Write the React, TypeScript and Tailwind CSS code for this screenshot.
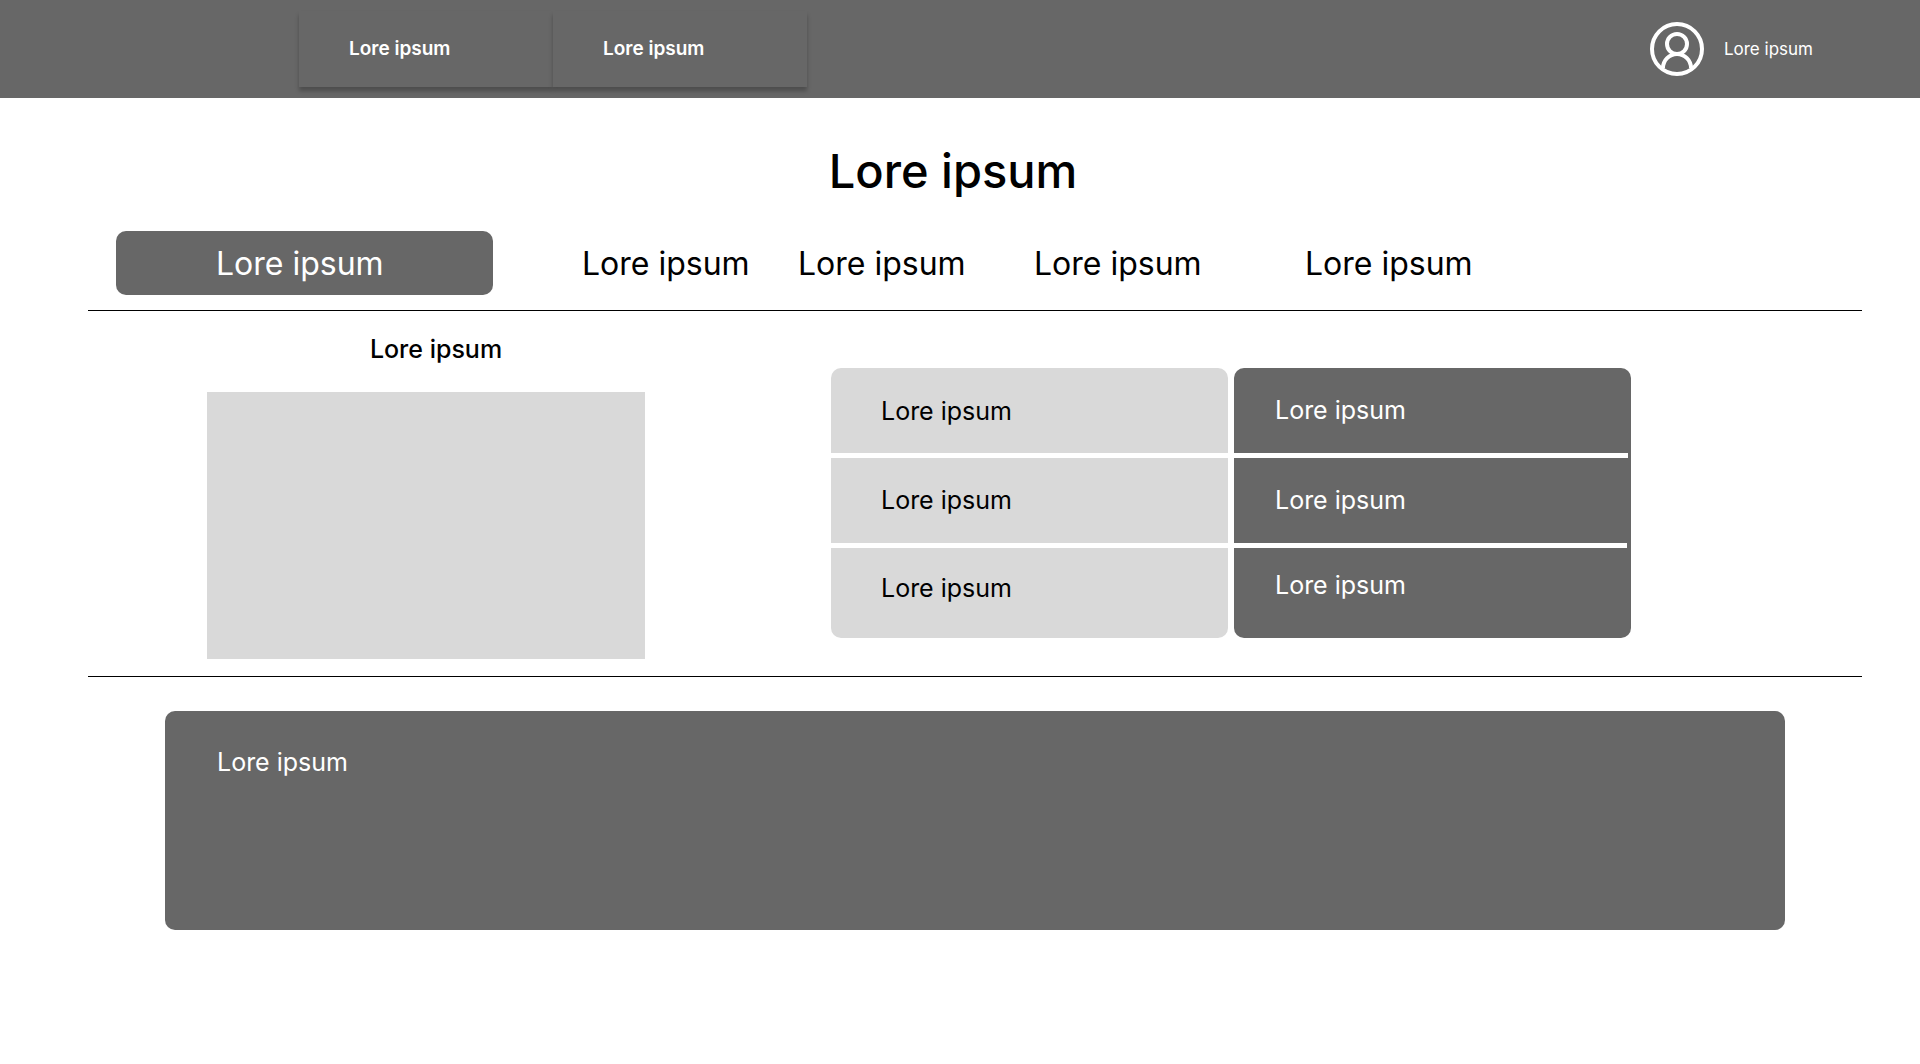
import React from "react";

const menuItems = ["Lore ipsum", "Lore ipsum"];
const tabs = ["Lore ipsum", "Lore ipsum", "Lore ipsum", "Lore ipsum"];

function UserIcon() {
  return (
    <svg
      className="size-[54px]"
      viewBox="0 0 54 54"
      fill="none"
      stroke="currentColor"
      strokeWidth="4"
      aria-hidden="true"
    >
      <circle cx="27" cy="27" r="25" />
      <circle cx="27" cy="22" r="10" />
      <path d="M13 46a14 14 0 0 1 28 0" />
    </svg>
  );
}

function Header() {
  return (
    <header className="flex h-[98px] items-center justify-between bg-[#676767] pr-[107px] pl-[299px] text-white">
      <nav aria-label="Main" className="flex">
        {menuItems.map((label, i) => (
          <button
            key={i}
            type="button"
            className="h-[76px] w-[254px] bg-[#676767] pl-[50px] text-left text-[19px] leading-6 font-semibold shadow-[0_4px_4px_rgba(0,0,0,0.25)]"
          >
            {label}
          </button>
        ))}
      </nav>
      <button type="button" className="flex items-center gap-5 text-[17px] leading-6">
        <UserIcon />
        Lore ipsum
      </button>
    </header>
  );
}

function Tabs() {
  return (
    <nav
      aria-label="Sections"
      className="grid grid-cols-[466fr_216fr_236fr_271fr_557fr] items-center pl-7 text-[32px] leading-10"
    >
      <div className="pr-[89px]">
        <button
          type="button"
          aria-current="page"
          className="h-16 w-full rounded-[10px] bg-[#676767] pt-0.5 pl-[100px] text-left text-white"
        >
          Lore ipsum
        </button>
      </div>
      {tabs.map((label, i) => (
        <button key={i} type="button" className="justify-self-start pt-0.5">
          {label}
        </button>
      ))}
    </nav>
  );
}

function DetailsTable() {
  return (
    <table className="w-full table-fixed border-separate border-spacing-0 text-left text-[25px] leading-8">
      <tbody>
        <tr>
          <th scope="row" className="p-0 pr-[3px] font-normal">
            <div className="mb-[5px] flex h-[85px] items-center rounded-t-[10px] bg-[#d9d9d9] pl-[50px]">
              Lore ipsum
            </div>
          </th>
          <td className="p-0 pl-[3px] text-white">
            <div className="rounded-t-[10px] bg-[#676767] pr-[3px]">
              <div className="flex h-[90px] items-center border-b-[5px] border-white pb-0.5 pl-[41px]">
                Lore ipsum
              </div>
            </div>
          </td>
        </tr>
        <tr>
          <th scope="row" className="p-0 pr-[3px] font-normal">
            <div className="mb-[5px] flex h-[85px] items-center bg-[#d9d9d9] pb-0.5 pl-[50px]">
              Lore ipsum
            </div>
          </th>
          <td className="p-0 pl-[3px] text-white">
            <div className="bg-[#676767] pr-1">
              <div className="flex h-[90px] items-center border-b-[5px] border-white pb-0.5 pl-[41px]">
                Lore ipsum
              </div>
            </div>
          </td>
        </tr>
        <tr>
          <th scope="row" className="p-0 pr-[3px] font-normal">
            <div className="flex h-[90px] items-center rounded-b-[10px] bg-[#d9d9d9] pb-2.5 pl-[50px]">
              Lore ipsum
            </div>
          </th>
          <td className="p-0 pl-[3px] text-white">
            <div className="flex h-[90px] items-center rounded-b-[10px] bg-[#676767] pb-4 pl-[41px]">
              Lore ipsum
            </div>
          </td>
        </tr>
      </tbody>
    </table>
  );
}

export default function App() {
  return (
    <div className="min-h-screen bg-white font-['Inter',sans-serif] text-black">
      <Header />
      <main className="pt-[45px] pr-[58px] pl-[88px]">
        <h1 className="pr-11 text-center text-[47px] leading-[56px] font-medium">Lore ipsum</h1>
        <div className="mt-8 border-b border-black pb-[15px]">
          <Tabs />
        </div>
        <div className="grid grid-cols-[119fr_438fr_186fr_800fr_231fr] border-b border-black pt-[22px] pb-[17px]">
          <section className="col-start-2">
            <h2 className="pl-5 text-center text-[25px] leading-8 font-medium">Lore ipsum</h2>
            <div className="mt-[27px] h-[267px] bg-[#d9d9d9]" />
          </section>
          <section className="col-start-4 pt-[35px]">
            <DetailsTable />
          </section>
        </div>
        <section className="mt-[34px] mr-[77px] ml-[77px] min-h-[219px] rounded-[10px] bg-[#676767] pt-[35px] pl-[52px] text-[25px] leading-8 text-white">
          <p>Lore ipsum</p>
        </section>
      </main>
    </div>
  );
}
